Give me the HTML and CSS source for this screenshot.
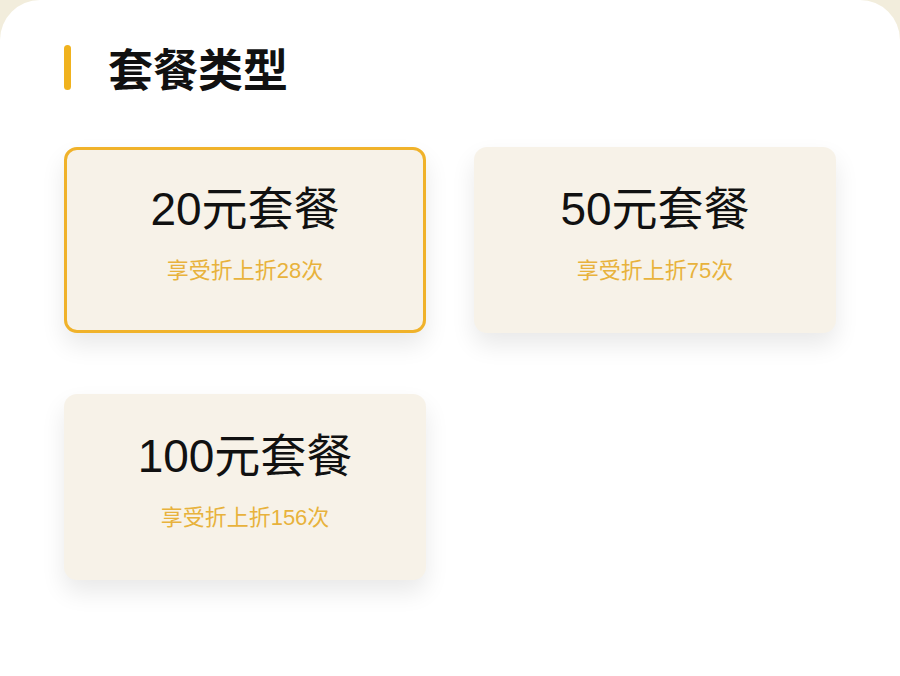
FILE: index.html
```html
<!DOCTYPE html>
<html lang="zh-CN">
<head>
<meta charset="UTF-8">
<meta name="viewport" content="width=device-width, initial-scale=1.0">
<title>套餐类型</title>
<link rel="stylesheet" href="styles.css">
</head>
<body>

<div class="panel">
  <div class="section-title">
    <span class="bar"></span>
    <h2>套餐类型</h2>
  </div>

  <div class="package-list">
    <div class="package active">
      <div class="package-name">20元套餐</div>
      <div class="package-desc">享受折上折28次</div>
    </div>
    <div class="package">
      <div class="package-name">50元套餐</div>
      <div class="package-desc">享受折上折75次</div>
    </div>
    <div class="package">
      <div class="package-name">100元套餐</div>
      <div class="package-desc">享受折上折156次</div>
    </div>
  </div>
</div>

</body>
</html>
```

FILE: styles.css
```css
html, body {
  margin: 0;
  height: 100%;
}
body {
  font-family: "Liberation Sans", "Noto Sans CJK SC", sans-serif;
  background: #f2eddc;
}
.panel {
  min-height: 100%;
  box-sizing: border-box;
  background: #fff;
  border-radius: 40px 40px 0 0;
  padding: 45px 64px 40px;
}
.section-title {
  display: flex;
  align-items: center;
  height: 45px;
}
.bar {
  width: 7px;
  height: 45px;
  border-radius: 4px;
  background: #f0b21e;
}
h2 {
  margin: 0 0 0 37px;
  font-family: "Noto Sans CJK SC", sans-serif;
  font-size: 45px;
  font-weight: bold;
  color: #111;
  line-height: 45px;
}
.package-list {
  display: grid;
  grid-template-columns: 362px 362px;
  column-gap: 48px;
  row-gap: 61px;
  margin-top: 57px;
}
.package {
  height: 186px;
  box-sizing: border-box;
  border: 3px solid transparent;
  border-radius: 13px;
  background: #f7f2e8;
  box-shadow: 0 12px 24px rgba(0,0,0,0.09);
  text-align: center;
  padding-top: 31px;
}
.package.active {
  border-color: #f0b22a;
}
.package-name {
  font-size: 46px;
  line-height: 56px;
  color: #111;
}
.package-desc {
  margin-top: 19px;
  font-size: 22px;
  line-height: 30px;
  color: #e8b23c;
}
```
